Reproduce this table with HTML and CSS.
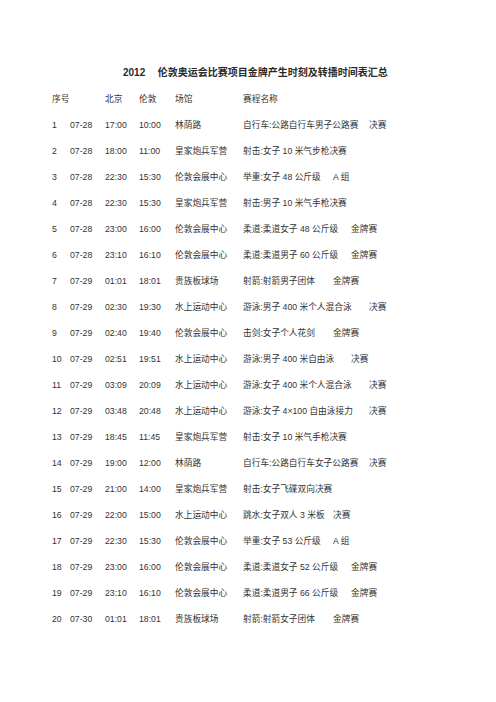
FILE: index.html
```html
<!DOCTYPE html>
<html lang="zh-CN">
<head>
<meta charset="utf-8">
<title>2012 伦敦奥运会比赛项目金牌产生时刻及转播时间表汇总</title>
<link rel="stylesheet" href="styles.css">
</head>
<body>
<div class="page">
  <h1 class="title"><span class="year">2012</span><span>伦敦奥运会比赛项目金牌产生时刻及转播时间表汇总</span></h1>
  <div class="table">
    <div class="row head"><span class="c-no">序号</span><span></span><span>北京</span><span>伦敦</span><span>场馆</span><span class="ev">赛程名称</span></div>
    <div class="row"><span>1</span><span>07-28</span><span>17:00</span><span>10:00</span><span>林荫路</span><span class="ev">自行车:公路自行车男子公路赛	决赛</span></div>
    <div class="row"><span>2</span><span>07-28</span><span>18:00</span><span>11:00</span><span>皇家炮兵军营</span><span class="ev">射击:女子 10 米气步枪决赛</span></div>
    <div class="row"><span>3</span><span>07-28</span><span>22:30</span><span>15:30</span><span>伦敦会展中心</span><span class="ev">举重:女子 48 公斤级	A 组</span></div>
    <div class="row"><span>4</span><span>07-28</span><span>22:30</span><span>15:30</span><span>皇家炮兵军营</span><span class="ev">射击:男子 10 米气手枪决赛</span></div>
    <div class="row"><span>5</span><span>07-28</span><span>23:00</span><span>16:00</span><span>伦敦会展中心</span><span class="ev">柔道:柔道女子 48 公斤级	金牌赛</span></div>
    <div class="row"><span>6</span><span>07-28</span><span>23:10</span><span>16:10</span><span>伦敦会展中心</span><span class="ev">柔道:柔道男子 60 公斤级	金牌赛</span></div>
    <div class="row"><span>7</span><span>07-29</span><span>01:01</span><span>18:01</span><span>贵族板球场</span><span class="ev">射箭:射箭男子团体	金牌赛</span></div>
    <div class="row"><span>8</span><span>07-29</span><span>02:30</span><span>19:30</span><span>水上运动中心</span><span class="ev">游泳:男子 400 米个人混合泳	决赛</span></div>
    <div class="row"><span>9</span><span>07-29</span><span>02:40</span><span>19:40</span><span>伦敦会展中心</span><span class="ev">击剑:女子个人花剑	金牌赛</span></div>
    <div class="row"><span>10</span><span>07-29</span><span>02:51</span><span>19:51</span><span>水上运动中心</span><span class="ev">游泳:男子 400 米自由泳	决赛</span></div>
    <div class="row"><span>11</span><span>07-29</span><span>03:09</span><span>20:09</span><span>水上运动中心</span><span class="ev">游泳:女子 400 米个人混合泳	决赛</span></div>
    <div class="row"><span>12</span><span>07-29</span><span>03:48</span><span>20:48</span><span>水上运动中心</span><span class="ev">游泳:女子 4×100 自由泳接力	决赛</span></div>
    <div class="row"><span>13</span><span>07-29</span><span>18:45</span><span>11:45</span><span>皇家炮兵军营</span><span class="ev">射击:女子 10 米气手枪决赛</span></div>
    <div class="row"><span>14</span><span>07-29</span><span>19:00</span><span>12:00</span><span>林荫路</span><span class="ev">自行车:公路自行车女子公路赛	决赛</span></div>
    <div class="row"><span>15</span><span>07-29</span><span>21:00</span><span>14:00</span><span>皇家炮兵军营</span><span class="ev">射击:女子飞碟双向决赛</span></div>
    <div class="row"><span>16</span><span>07-29</span><span>22:00</span><span>15:00</span><span>水上运动中心</span><span class="ev">跳水:女子双人 3 米板	决赛</span></div>
    <div class="row"><span>17</span><span>07-29</span><span>22:30</span><span>15:30</span><span>伦敦会展中心</span><span class="ev">举重:女子 53 公斤级	A 组</span></div>
    <div class="row"><span>18</span><span>07-29</span><span>23:00</span><span>16:00</span><span>伦敦会展中心</span><span class="ev">柔道:柔道女子 52 公斤级	金牌赛</span></div>
    <div class="row"><span>19</span><span>07-29</span><span>23:10</span><span>16:10</span><span>伦敦会展中心</span><span class="ev">柔道:柔道男子 66 公斤级	金牌赛</span></div>
    <div class="row"><span>20</span><span>07-30</span><span>01:01</span><span>18:01</span><span>贵族板球场</span><span class="ev">射箭:射箭女子团体	金牌赛</span></div>
  </div>
</div>
</body>
</html>
```

FILE: styles.css
```css
html, body {
  margin: 0;
  padding: 0;
  background: #ffffff;
}

body {
  font-family: "Liberation Sans", "Noto Sans CJK SC", sans-serif;
  color: #333333;
}

.page {
  padding: 60px 0 0 52px;
}

.title {
  display: flex;
  gap: 12.5px;
  margin: 0;
  padding-left: 71px;
  height: 26px;
  line-height: 26px;
  font-size: 10px;
  font-weight: bold;
  color: #2a2a2a;
}

.table {
  display: flex;
  flex-direction: column;
  font-size: 8.7px;
}

.row {
  display: grid;
  grid-template-columns: 18px 35px 34px 36px 68px 1fr;
  height: 26px;
  line-height: 26px;
  white-space: nowrap;
}

.ev {
  white-space: pre;
  tab-size: 18px;
}
```
